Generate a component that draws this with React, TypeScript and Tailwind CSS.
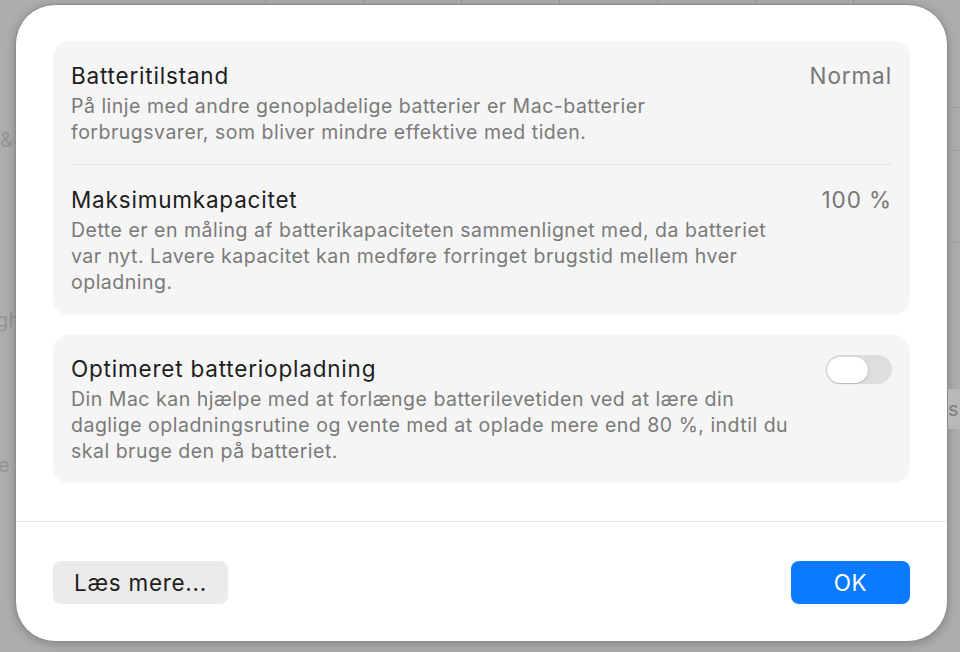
import { useState } from 'react';

const font = { fontFamily: 'Inter, "Noto Sans", "Liberation Sans", sans-serif' };

function Toggle({ on, onChange }: { on: boolean; onChange: () => void }) {
  return (
    <button
      onClick={onChange}
      className={`flex items-center px-px w-[66px] h-[29px] rounded-full shrink-0 ${on ? 'bg-[#0a7aff] justify-end' : 'bg-[#dedede] justify-start'}`}
    >
      <span className="h-[26px] w-[41px] rounded-full bg-white shadow-[0_0.5px_2px_rgba(0,0,0,0.3)]" />
    </button>
  );
}

function Row({ title, value, lines }: { title: string; value?: React.ReactNode; lines: string[] }) {
  return (
    <div className="flex items-start justify-between gap-6">
      <div className="flex flex-col gap-[3px]">
        <div className="text-[22.5px] leading-[28px] text-[#1d1d1d] tracking-[0.8px]">{title}</div>
        <div className="text-[19.5px] leading-[26px] text-[#7a7a7a] tracking-[0.5px]">
          {lines.map((l, i) => (
            <div key={i} className="whitespace-nowrap">{l}</div>
          ))}
        </div>
      </div>
      {value}
    </div>
  );
}

function Value({ children }: { children: React.ReactNode }) {
  return <div className="text-[22.5px] leading-[28px] text-[#777] tracking-[0.9px] whitespace-nowrap">{children}</div>;
}

export default function App() {
  const [optimized, setOptimized] = useState(false);

  return (
    <div className="w-[960px] h-[652px] overflow-hidden bg-[#adadad] flex flex-col" style={font}>
      {/* dimmed window behind the sheet */}
      <div className="h-[4px] shrink-0 flex gap-[97px] pl-[265px]">
        {[0, 1, 2, 3, 4, 5, 6].map((i) => (
          <div key={i} className="w-px h-full bg-[#999]" />
        ))}
      </div>

      <div className="flex flex-1 min-h-0">
        <div className="w-[15px] shrink-0 overflow-hidden flex flex-col text-[20px] leading-[24px] text-[#949494] pt-[124px]">
          <div>&amp;</div>
          <div className="mt-[156px] -ml-[4px]">gh</div>
          <div className="mt-[121px] -ml-[2px]">e</div>
        </div>

        <div className="w-[933px] h-[638px] shrink-0 rounded-[40px] bg-white border border-[#8c8c8c] shadow-[0_2px_10px_rgba(0,0,0,0.25)] flex flex-col">
          <div className="flex flex-col gap-5 px-[37px] pt-[36px]">
            <div className="bg-[#f5f5f5] rounded-[16px] px-[18px] pt-[21px] h-[274px]">
              <Row
                title="Batteritilstand"
                value={<Value>Normal</Value>}
                lines={[
                  'På linje med andre genopladelige batterier er Mac-batterier',
                  'forbrugsvarer, som bliver mindre effektive med tiden.',
                ]}
              />
              <div className="h-px bg-[#e3e3e3] mt-[19px] mb-[21px]" />
              <Row
                title="Maksimumkapacitet"
                value={<Value>100 %</Value>}
                lines={[
                  'Dette er en måling af batterikapaciteten sammenlignet med, da batteriet',
                  'var nyt. Lavere kapacitet kan medføre forringet brugstid mellem hver',
                  'opladning.',
                ]}
              />
            </div>

            <div className="bg-[#f5f5f5] rounded-[16px] px-[18px] pt-[20px] h-[148px]">
              <Row
                title="Optimeret batteriopladning"
                value={<Toggle on={optimized} onChange={() => setOptimized(!optimized)} />}
                lines={[
                  'Din Mac kan hjælpe med at forlænge batterilevetiden ved at lære din',
                  'daglige opladningsrutine og vente med at oplade mere end 80 %, indtil du',
                  'skal bruge den på batteriet.',
                ]}
              />
            </div>
          </div>

          <div className="h-px bg-[#e5e5e5] mt-[38px]" />

          <div className="flex items-center justify-between px-[37px] pt-[39px]">
            <button className="w-[175px] h-[43px] rounded-[8px] bg-[#ebebeb] text-[22.5px] text-[#1d1d1d] tracking-[0.7px]">
              Læs mere...
            </button>
            <button className="w-[119px] h-[43px] rounded-[8px] bg-[#0a7aff] text-[22.5px] text-white tracking-[0.5px]">
              OK
            </button>
          </div>
        </div>

        <div className="flex-1 flex flex-col pt-[103px]">
          <div className="h-px bg-[#9c9c9c]" />
          <div className="h-px bg-[#9c9c9c] mt-[42px]" />
          <div className="h-px bg-[#9c9c9c] mt-[91px]" />
          <div className="mt-[146px] h-[40px] bg-[#b8b8b8] flex items-center overflow-hidden text-[20px] text-[#7d7d7d]">
            s
          </div>
        </div>
      </div>
    </div>
  );
}
